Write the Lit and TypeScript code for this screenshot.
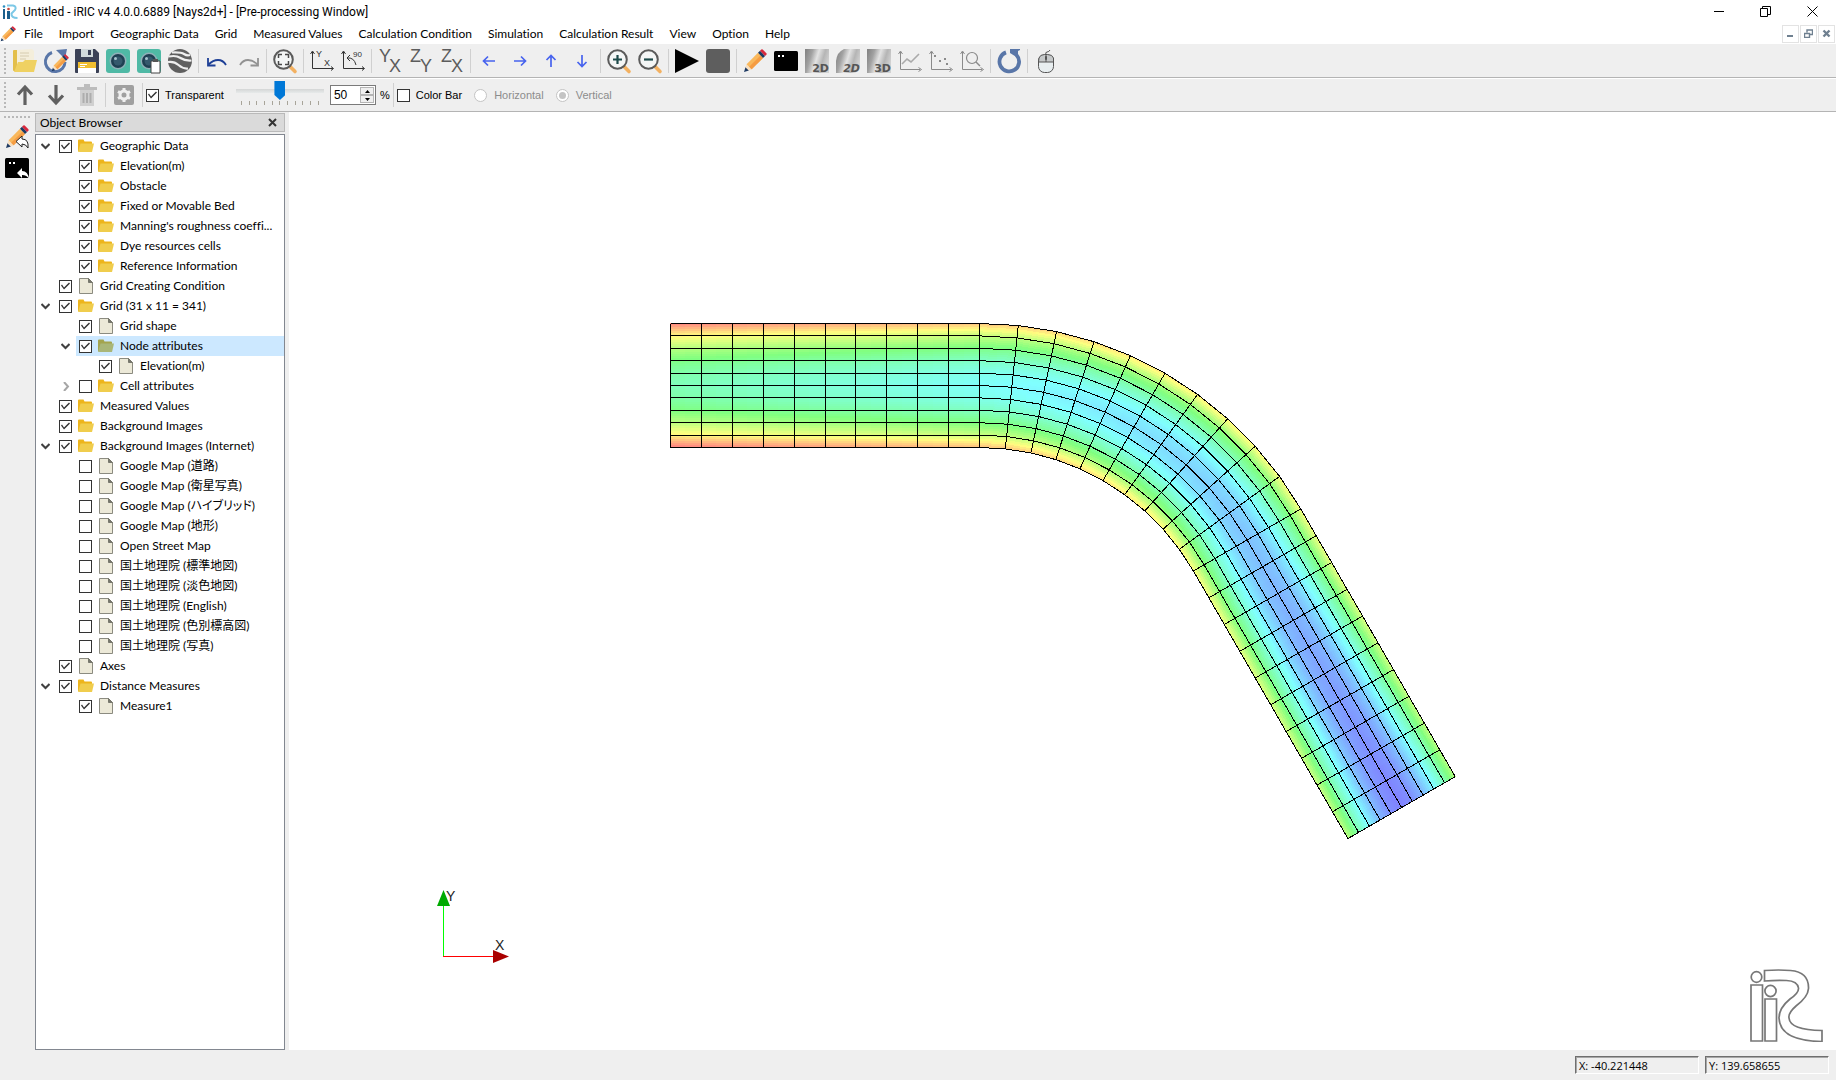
import { LitElement, html, svg, css, TemplateResult, SVGTemplateResult } from "lit";
import { customElement, property, state } from "lit/decorators.js";
import { classMap } from "lit/directives/class-map.js";

/* ------------------------------------------------------------------ icons */

const PENCIL = svg`
  <path d="M1 23l1.6-5L6 21.4z" fill="#1d3a63"/>
  <path d="M2.4 18.2L4 14.6l5.4 5.4-3.600 1.500z" fill="#f7dfc0"/>
  <path d="M3.600 15.200L15 3.800 20 8.900 8.700 20.300z" fill="#f9b85c"/>
  <path d="M6.200 17.700L17.500 6.400 20 8.900 8.700 20.300z" fill="#f59c43"/>
  <path d="M15 3.800l2-2 5.100 5.100-2.100 2z" fill="#1d3a63"/>
  <path d="M17 1.800L18.300.6q.7-.6 1.400 0l3.700 3.700q.6.700 0 1.400l-1.300 1.200z" fill="#d8283c"/>`;

const CONSOLE = svg`
  <rect x="0" y="2" width="24" height="20" rx="1.500" fill="#000"/>
  <path d="M4 6h2v2H4zM8 6h2v2H8z" fill="#fff"/>`;

const CAMERA = svg`
  <rect width="24" height="24" rx="3" fill="#4fb9a5"/>
  <circle cx="12" cy="12" r="8.500" fill="#8fb0b8"/>
  <circle cx="12" cy="12" r="7" fill="#1f3f52"/>
  <circle cx="12" cy="12" r="4.500" fill="#35596d"/>
  <circle cx="9.500" cy="9.500" r="1.500" fill="#a6c3cd"/>`;

const LENS = svg`
  <path d="M16.500 17l5.500 5.500" stroke="#f3b161" stroke-width="3.600" stroke-linecap="round"/>
  <circle cx="10.500" cy="10.500" r="9.300" fill="#f4f6f6" stroke="#5b5b5b" stroke-width="2"/>`;

const FRAME = svg`
  <path d="M2.500 3v17.500H22" fill="none" stroke="#8a8a8a"/>
  <path d="M.5 5l2-3 2 3M20.500 18.500l3 2-3 2" fill="none" stroke="#8a8a8a"/>`;

const FRAME_DARK = svg`
  <path d="M2.500 3v16.500H23" fill="none" stroke="#333"/>
  <path d="M.5 5l2-3 2 3M21 17.500l2.500 2-2.500 2" fill="none" stroke="#333"/>`;

const SHADE = svg`
  <defs>
    <linearGradient id="metal" x1="0" y1="0.200" x2="1" y2="0.500">
      <stop offset="0" stop-color="#858585"/><stop offset=".25" stop-color="#a2a2a2"/>
      <stop offset=".5" stop-color="#e3e3e3"/><stop offset=".75" stop-color="#b5b5b5"/>
      <stop offset="1" stop-color="#d2d2d2"/>
    </linearGradient>
  </defs>`;

const pair = (a: string, b: string) => svg`
  <g fill="#5c5c5c" font-family="Liberation Sans, sans-serif" font-size="18">
    <text x="1" y="13">${a}</text><text x="11" y="23">${b}</text>
  </g>`;

const view = (label: string, slanted = false) => svg`
  ${SHADE}
  <path d=${slanted ? "M8 0h16v16q0 8-8 8H0V12Q1 3 8 0z" : "M0 0h24v24H0z"} fill="url(#metal)"/>
  <text x="24" y="23" text-anchor="end" fill="#555" font-family="DejaVu Sans, sans-serif" font-size="11"
    font-weight="bold" font-style=${slanted ? "italic" : "normal"}>${label}</text>`;

const ICONS: Record<string, SVGTemplateResult> = {
  open: svg`
    <path d="M0 2q0-1 1-1h5l1 2h13v19H1q-1 0-1-1z" fill="#e3bf4b"/>
    <path d="M4 1l15-1 2 2v14H4z" fill="#f4eedb"/>
    <path d="M7 4h9M7 7h9M7 10h6" stroke="#d6ccb0"/>
    <path d="M1 23l4-10h5l2-2h12l-3 12z" fill="#efd162"/>`,
  reopen: svg`
    <path d="M8 3.500A9.800 9.800 0 1 0 21 13" fill="none" stroke="#5976a8" stroke-width="3"/>
    <path d="M12 1l11-1-2 10z" fill="#5976a8"/>
    <g transform="translate(7 5) scale(.75)">${PENCIL}</g>`,
  save: svg`
    <path d="M0 1q0-1 1-1h19l4 4v19q0 1-1 1H1q-1 0-1-1z" fill="#3b4156"/>
    <path d="M6 0h12v8H6z" fill="#d2dadb"/><path d="M13 1h3v5h-3z" fill="#3b4156"/>
    <path d="M3 13h18v11H3z" fill="#fff"/><path d="M3 13h18v6H3z" fill="#f1be2f"/>
    <path d="M5 15.500h7M5 17.500h5" stroke="#fff"/>`,
  camera: CAMERA,
  cameraCopy: svg`${CAMERA}
    <path d="M14 12h9v12h-9z" fill="#fff" stroke="#444"/><path d="M16 10h5v3h-5z" fill="#555"/>`,
  earth: svg`
    <circle cx="12" cy="12" r="12" fill="#606060"/>
    <path d="M1 7.500q7-1.500 11.500 1.500t11 2.500M0 13q6-1 10.500 3t9.500 3.500M4 3.500q9-.5 12 1.500t6 1" fill="none" stroke="#efefef" stroke-width="2.200"/>`,
  undo: svg`<path d="M3.500 15.500Q8 11 13 11t8 5" fill="none" stroke="#1d3f96" stroke-width="1.800"/>
    <path d="M3 9v7.500h7.500" fill="none" stroke="#1d3f96" stroke-width="1.800"/>`,
  redo: svg`<path d="M21.500 15.500Q17 11 12 11t-8 5" fill="none" stroke="#929292" stroke-width="1.800"/>
    <path d="M22 9v7.500h-7.500" fill="none" stroke="#929292" stroke-width="1.800"/>`,
  fit: svg`${LENS}<path d="M5.500 9V5.500H9M12 5.500h3.500V9M15.500 12v3.500H12M9 15.500H5.500V12" fill="none"
    stroke="#4a4a4a" stroke-width="1.500"/>`,
  axes: svg`${FRAME_DARK}<g fill="#333" font-family="Liberation Sans, sans-serif" font-size="9">
    <text x="6" y="8">Y</text><text x="14" y="17">X</text></g>`,
  rotate: svg`${FRAME_DARK}<path d="M6 9q7-1 9 7M9 6L6 9l3 3" fill="none" stroke="#333"/>
    <text x="12" y="8" fill="#333" font-family="Liberation Sans, sans-serif" font-size="8">90</text>`,
  yx: pair("Y", "X"),
  zy: pair("Z", "Y"),
  zx: pair("Z", "X"),
  left: svg`<path d="M18 12H7M11 7.500L6.500 12l4.500 4.500" fill="none" stroke="#4763ee" stroke-width="1.700"/>`,
  right: svg`<path d="M6 12h11M13 7.500l4.500 4.500-4.500 4.500" fill="none" stroke="#4763ee" stroke-width="1.700"/>`,
  up: svg`<path d="M12 18V7M7.500 11L12 6.500l4.500 4.500" fill="none" stroke="#4763ee" stroke-width="1.700"/>`,
  down: svg`<path d="M12 6v11M7.500 13l4.500 4.500 4.500-4.500" fill="none" stroke="#4763ee" stroke-width="1.700"/>`,
  zoomIn: svg`${LENS}<path d="M6 10.500h9M10.500 6v9" stroke="#1d4a4a" stroke-width="2.200"/>`,
  zoomOut: svg`${LENS}<path d="M6 10.500h9" stroke="#1d4a4a" stroke-width="2.200"/>`,
  play: svg`<path d="M0 0l24 12L0 24z" fill="#000"/>`,
  stop: svg`<rect width="24" height="24" rx="3" fill="#5e5e5e"/>`,
  pencil: PENCIL,
  console: CONSOLE,
  view2d: view("2D"),
  view2dSlant: view("2D", true),
  view3d: view("3D"),
  line: svg`${FRAME}<path d="M4 15l5-5 4 3 8-8" fill="none" stroke="#aaa" stroke-width="1.600"/>`,
  scatter: svg`${FRAME}<path d="M5 6h2v2H5zM10 11h2v2h-2zM15 9h2v2h-2zM17 14h2v2h-2z" fill="#8a8a8a"/>`,
  inspect: svg`${FRAME}<circle cx="12" cy="9" r="5.500" fill="none" stroke="#8a8a8a" stroke-width="1.200"/>
    <path d="M16 13l4 4" stroke="#8a8a8a" stroke-width="1.500"/>`,
  reload: svg`<path d="M9 3.400A9.800 9.800 0 1 0 19.500 6" fill="none" stroke="#5976a8" stroke-width="3.800"/>
    <path d="M13 0h10v1l-2 1v7l-8-5z" fill="#5976a8"/>`,
  mouse: svg`<rect x="4.500" y="6" width="15" height="17.500" rx="6" fill="#e8eef0" stroke="#555"/>
    <path d="M5 9q1-3.500 5.500-3.500h3Q18.500 5.500 19.500 9v4h-15z" fill="#c5c8c9" stroke="#555"/>
    <path d="M12 13V6M12 6q-1-3 1-3t3-2" fill="none" stroke="#555"/><rect x="11" y="7" width="2" height="4" rx="1" fill="#555"/>`,
  moveUp: svg`<path d="M12 22V5M5 11.500L12 4l7 7.500" fill="none" stroke="#606060" stroke-width="3.200"/>`,
  moveDown: svg`<path d="M12 2v17M5 12.500L12 20l7-7.500" fill="none" stroke="#606060" stroke-width="3.200"/>`,
  trash: svg`<path d="M2 4h20v3H2zM9 1h6v3H9z" fill="#bcbcbc"/><path d="M5 7h14v16H5z" fill="#d0d0d0"/>
    <path d="M8.500 10v10M12 10v10M15.500 10v10" stroke="#adadad" stroke-width="2"/>`,
  gear: svg`<rect x="2" y="2" width="20" height="20" rx="2" fill="#a0a0a0"/>
    <path d="M12 5v14M6 8.500l12 7M6 15.500l12-7" stroke="#efefef" stroke-width="3"/>
    <circle cx="12" cy="12" r="4" fill="#a0a0a0" stroke="#efefef" stroke-width="3"/>`,
  pencilBack: svg`${PENCIL}<path d="M17 11v3q7 0 6 9-2-4-6-4v3l-6-5.500z" fill="#fff" stroke="#222"/>`,
  consoleBack: svg`${CONSOLE}<path d="M17 12v3q6 0 7 8-2-4-7-4v3l-5-5z" fill="#fff"/>`,
};

const icon = (name: string) => html`<svg class="icon" viewBox="0 0 24 24" aria-hidden="true">${ICONS[name]}</svg>`;

const FOLDER = html`<svg class="node-icon" viewBox="0 0 16 16" aria-hidden="true">
  <path class="folder-back" d="M0 2.500q0-1 1-1h4.500l1 2H13q1 0 1 1V13H0z"/>
  <path class="folder-front" d="M0 14L2.500 5.500h13.500l-2 8.500z"/></svg>`;
const SHEET = html`<svg class="node-icon" viewBox="0 0 16 16" aria-hidden="true">
  <path d="M1.500.5h9l4 4v11h-13z" fill="#ece9d8" stroke="#8b8b80"/>
  <path d="M10.500.5v4h4z" fill="#77776c" stroke="#77776c"/></svg>`;

/* --------------------------------------------------------------- toolbars */

type Tool = [string, string] | null;

const MAIN_TOOLS: Tool[] = [
  ["open", "Open"], ["reopen", "Reload project"], ["save", "Save"], ["camera", "Snapshot"],
  ["cameraCopy", "Copy snapshot"], ["earth", "Google Earth export"], null,
  ["undo", "Undo"], ["redo", "Redo"], null, ["fit", "Fit"], null,
  ["axes", "Reset rotation"], ["rotate", "Rotate 90"], null,
  ["yx", "XY plane"], ["zy", "YZ plane"], ["zx", "XZ plane"], null,
  ["left", "Move left"], ["right", "Move right"], ["up", "Move up"], ["down", "Move down"], null,
  ["zoomIn", "Zoom in"], ["zoomOut", "Zoom out"], null, ["play", "Run"], ["stop", "Stop"], null,
  ["pencil", "Pre-processing"], ["console", "Solver console"], ["view2d", "2D window"],
  ["view2dSlant", "2D bird's-eye window"], ["view3d", "3D window"], ["line", "Graph window"],
  ["scatter", "Scatter chart"], ["inspect", "Verification"], null, ["reload", "Reload"], null,
  ["mouse", "Mouse hint"],
];

const EDIT_TOOLS: Tool[] = [["moveUp", "Move up"], ["moveDown", "Move down"], ["trash", "Delete"], null,
  ["gear", "Property"], null];

const MENUS = ["File", "Import", "Geographic Data", "Grid", "Measured Values", "Calculation Condition",
  "Simulation", "Calculation Result", "View", "Option", "Help"];

const tools = (list: Tool[]) => list.map((t) => t
  ? html`<button class="tool" title=${t[1]} aria-label=${t[1]}>${icon(t[0])}</button>`
  : html`<span class="sep"></span>`);

/* ------------------------------------------------------------------- tree */

interface Node { text: string; level: number; checked: boolean; folder: boolean; open?: boolean; }

const n = (level: number, text: string, kind: "d" | "f", checked = true, open?: boolean): Node =>
  ({ level, text, folder: kind === "d", checked, open });

const NODES: Node[] = [
  n(0, "Geographic Data", "d", true, true),
  n(1, "Elevation(m)", "d"), n(1, "Obstacle", "d"), n(1, "Fixed or Movable Bed", "d"),
  n(1, "Manning's roughness coeffi...", "d"), n(1, "Dye resources cells", "d"),
  n(1, "Reference Information", "d"),
  n(0, "Grid Creating Condition", "f"),
  n(0, "Grid (31 x 11 = 341)", "d", true, true),
  n(1, "Grid shape", "f"),
  n(1, "Node attributes", "d", true, true),
  n(2, "Elevation(m)", "f"),
  n(1, "Cell attributes", "d", false, false),
  n(0, "Measured Values", "d"),
  n(0, "Background Images", "d"),
  n(0, "Background Images (Internet)", "d", true, true),
  n(1, "Google Map (道路)", "f", false), n(1, "Google Map (衛星写真)", "f", false),
  n(1, "Google Map (ハイブリッド)", "f", false), n(1, "Google Map (地形)", "f", false),
  n(1, "Open Street Map", "f", false),
  n(1, "国土地理院 (標準地図)", "f", false), n(1, "国土地理院 (淡色地図)", "f", false),
  n(1, "国土地理院 (English)", "f", false), n(1, "国土地理院 (色別標高図)", "f", false),
  n(1, "国土地理院 (写真)", "f", false),
  n(0, "Axes", "f"),
  n(0, "Distance Measures", "d", true, true),
  n(1, "Measure1", "f"),
];

@customElement("object-tree")
export class ObjectTree extends LitElement {
  @property({ attribute: false }) nodes: Node[] = [];
  @state() private selected = 10;

  static styles = css`
    :host { display: block; }
    .list { list-style: none; margin: 0; padding: 1px 0; font-feature-settings: "palt"; }
    .row { display: flex; align-items: center; height: 20px; }
    .l1 { padding-left: 20px; }
    .l2 { padding-left: 40px; }
    .twist { width: 20px; height: 20px; padding: 0 1px 0 0; border: 0; background: none; display: grid; place-items: center; flex: none; box-sizing: border-box; }
    .twist svg { width: 9px; height: 9px; fill: none; stroke: #404040; stroke-width: 2; }
    .twist.closed svg { stroke: #a6a6a6; }
    .item { display: flex; align-items: center; flex: 1; min-width: 0; height: 20px; padding-left: 3px; }
    .item.selected { background: #cce8ff; }
    .check { appearance: none; width: 13px; height: 13px; margin: 0 6px 0 0; border: 1px solid #333; background: #fff; flex: none; display: block; }
    .check:checked::after { content: ""; display: block; width: 11px; height: 11px; background: #333;
      clip-path: polygon(1px 5px, 2px 4px, 4px 7px, 9px 2px, 10px 3px, 4px 9px); }
    .node-icon { width: 16px; height: 16px; margin-right: 6px; flex: none; }
    .folder-back { fill: #edb51c; }
    .folder-front { fill: #f0cd4d; }
    .selected .folder-back { fill: #a3a44f; }
    .selected .folder-front { fill: #a9b678; }
    .text { white-space: nowrap; line-height: 20px; }
  `;

  private twist(node: Node): TemplateResult {
    if (node.open === undefined) return html`<span class="twist"></span>`;
    return html`<button class=${classMap({ twist: true, closed: !node.open })}
      aria-label=${node.open ? "Collapse" : "Expand"}>
      <svg viewBox="0 0 9 9"><path d=${node.open ? "M.5 2l4 4 4-4" : "M3 0l4 4.500-4 4.500"}></path></svg></button>`;
  }

  render() {
    return html`<ul class="list">${this.nodes.map((node, i) => html`
      <li class="row l${node.level}">${this.twist(node)}
        <div class=${classMap({ item: true, selected: i === this.selected })} @click=${() => { this.selected = i; }}>
          <input class="check" type="checkbox" id="n${i}" .checked=${node.checked}>
          ${node.folder ? FOLDER : SHEET}
          <label class="text" for="n${i}">${node.text}</label>
        </div>
      </li>`)}</ul>`;
  }
}

/* ------------------------------------------------------------------ scene */

const COLS = 30;
const ROWS = 10;
const STEP = 12.4;
const LEG = 309;
const TURN = Math.PI / 3;
const START = { x: 381.5, y: 273.5 };
const PIVOT = { x: START.x + LEG, y: START.y + LEG };

/* Maps a station along the channel (0..30) and an offset across it (0..10) to the plane. */
function place(i: number, j: number): [number, number] {
  const off = (j - ROWS / 2) * STEP;
  if (i <= 10) return [START.x + (LEG * i) / 10, START.y + off];
  const a = Math.min((i - 10) / 10, 1) * TURN;
  const r = LEG - off;
  const x = PIVOT.x + r * Math.sin(a);
  const y = PIVOT.y - r * Math.cos(a);
  const rest = i > 20 ? (LEG * (i - 20)) / 10 : 0;
  return [x + rest * Math.cos(TURN), y + rest * Math.sin(TURN)];
}

/* Straight chords between grid nodes. */
function chord(i: number, j: number): [number, number] {
  const a = Math.min(Math.floor(i), COLS - 1);
  const f = i - a;
  const p = place(a, j);
  const q = place(a + 1, j);
  return [p[0] + (q[0] - p[0]) * f, p[1] + (q[1] - p[1]) * f];
}

/* Hue gained towards the middle of the channel, per grid line across it. */
const PROFILE = [0, 54, 92, 121, 140, 147, 140, 121, 92, 54, 0];

function tint(i: number, j: number): string {
  const a = Math.min(Math.floor(j), ROWS - 1);
  const f = j - a;
  const hue = Math.min(240, 3.1 * i + PROFILE[a] * (1 - f) + PROFILE[a + 1] * f);
  return `hsl(${hue.toFixed(1)} 100% 75%)`;
}

const join = (pts: [number, number][]) => pts.map(([x, y]) => `${x.toFixed(1)},${y.toFixed(1)}`).join(" ");

function patches(): SVGTemplateResult[] {
  const out: SVGTemplateResult[] = [];
  const du = 1 / 2;
  const dv = 1 / 6;
  for (let i = 0; i < COLS * 2; i++) {
    for (let j = 0; j < ROWS * 6; j++) {
      const u = i * du;
      const v = j * dv;
      const c = tint(u + du / 2, v + dv / 2);
      out.push(svg`<polygon points=${join([chord(u, v), chord(u + du, v), chord(u + du, v + dv), chord(u, v + dv)])}
        fill=${c} stroke=${c}/>`);
    }
  }
  return out;
}

function meshLines(): SVGTemplateResult[] {
  const out: SVGTemplateResult[] = [];
  for (let i = 0; i <= COLS; i++) out.push(svg`<polyline points=${join([place(i, 0), place(i, ROWS)])}/>`);
  for (let j = 0; j <= ROWS; j++) {
    out.push(svg`<polyline points=${join(Array.from({ length: COLS + 1 }, (_, i) => place(i, j)))}/>`);
  }
  return out;
}

@customElement("grid-scene")
export class GridScene extends LitElement {
  static styles = css`
    :host { display: block; position: relative; background: #fff; overflow: hidden; }
    .mesh { display: block; width: 100%; height: 100%; }
    .cells, .lines { shape-rendering: crispEdges; }
    .lines { fill: none; stroke: #000; stroke-width: 1; }
    .axes { position: absolute; left: 145px; bottom: 84px; width: 80px; height: 80px; }
    .logo { position: absolute; right: 13px; bottom: 8px; width: 74px; height: 74px; }
  `;

  render() {
    return html`
      <svg class="mesh" viewBox="0 0 1547 938" role="img" aria-label="Grid">
        <g class="cells">${patches()}</g>
        <g class="lines">${meshLines()}</g>
      </svg>
      <svg class="axes" viewBox="0 0 80 80" font-family="Liberation Sans, sans-serif" font-size="14">
        <path d="M9.500 20v50" stroke="#0f0"/>
        <path d="M9 70.500h50" stroke="#f00"/>
        <path d="M9.500 4l6.500 16H3z" fill="#00aa00"/>
        <path d="M75 70.500L59 64v13z" fill="#aa0000"/>
        <text x="12" y="15" fill="#222">Y</text>
        <text x="61" y="64" fill="#222">X</text>
      </svg>
      <svg class="logo" viewBox="0 0 74 74" fill="#fff" stroke="#777" stroke-width="1.700">
        <circle cx="7.500" cy="9" r="5.300"/>
        <path d="M2 17h11.500v56H2z"/>
        <circle cx="21.500" cy="23" r="5.600"/>
        <path d="M16 31h11.500v42H16z"/>
        <path d="M15.500 2.500q15-1 26 0Q60 4 59.500 20.500 59 29 47 38q-8 7-7 12 1 12 33 12.500v11Q31 73 30 50q0-10 11-19 9-6 8.500-11-1-7-12-7.500-10-.5-22 .5z"/>
      </svg>`;
  }
}

/* ------------------------------------------------------------------- root */

@customElement("app-root")
export class AppRoot extends LitElement {
  @state() private opacity = 50;

  static styles = css`
    :host { display: flex; flex-direction: column; height: 100vh; background: #efefef; color: #000;
      font: 12px/20px Lato, "Noto Sans CJK JP", sans-serif; font-variant-ligatures: none; }
    button, input { font: inherit; color: inherit; }
    .title { display: flex; align-items: center; height: 23px; background: #fff; padding-left: 2px; }
    .app-logo { width: 16px; height: 16px; margin-right: 5px; }
    .title h1 { font: 12px/24px Roboto, sans-serif; margin: 0; flex: 1; }
    .win { width: 46px; height: 20px; padding: 0; border: 0; background: none; display: grid; place-items: center; }
    .win:last-child { width: 48px; }
    .win svg { width: 11px; height: 11px; fill: none; stroke: #000; }
    .menubar { display: flex; align-items: center; height: 21px; background: #fff; border-bottom: 1px solid #efefef; }
    .menu-icon { width: 16px; height: 16px; flex: none; }
    .menus { display: flex; flex: 1; }
    .menu { border: 0; background: none; padding: 0 8px; line-height: 20px; white-space: nowrap; }
    .mdi { display: flex; gap: 1px; padding-right: 1px; }
    .mdi button { width: 17px; height: 18px; padding: 0; border: 1px solid #e3e3e3; background: #fff; display: grid; place-items: center; }
    .mdi svg { width: 9px; height: 9px; fill: none; stroke: #6f8090; }
    .top { background: #fff; }
    .bar { display: flex; align-items: center; gap: 1px; height: 32px; background: #efefef; border-bottom: 1px solid #b4b4b4; padding-left: 4px; }
    .main-bar { margin-bottom: 1px; }
    .grip { width: 2px; height: 26px; margin-right: 3px;
      background: repeating-linear-gradient(#b8b8b8 0 2px, transparent 2px 4px); }
    .tool { width: 30px; height: 30px; padding: 0; border: 0; background: none; display: grid; place-items: center; flex: none; }
    .icon { width: 24px; height: 24px; display: block; overflow: visible; }
    .sep { width: 1px; height: 24px; margin: 0 2px; background: #d0d0d0; flex: none; }
    .small { font: 11px/16px "Liberation Sans", sans-serif; }
    .opt { display: flex; align-items: center; gap: 6px; margin-right: 11px; }
    .opt.off { color: #8c8c8c; gap: 7px; }
    .check { appearance: none; width: 13px; height: 13px; margin: 0; border: 1px solid #333; background: #fff; display: block; }
    .check:checked::after { content: ""; display: block; width: 11px; height: 11px; background: #333;
      clip-path: polygon(1px 5px, 2px 4px, 4px 7px, 9px 2px, 10px 3px, 4px 9px); }
    .radio { appearance: none; width: 13px; height: 13px; margin: 0; border: 1px solid #c4c4c4; border-radius: 50%; background: #fff; display: grid; place-items: center; }
    .radio:checked::after { content: ""; width: 7px; height: 7px; border-radius: 50%; background: #c4c4c4; }
    .slide { display: flex; flex-direction: column; width: 88px; padding-bottom: 4px; }
    .range { appearance: none; width: 100%; height: 19px; margin: 0; background: linear-gradient(#d4d6d6, #e7eaea) center 8px / 100% 4px no-repeat; display: block; }
    .range::-webkit-slider-thumb { appearance: none; width: 11px; height: 19px; background: #0078d7;
      clip-path: polygon(0 0, 100% 0, 100% 14px, 50% 100%, 0 14px); }
    .ticks { display: flex; justify-content: space-between; padding: 1px 5px 0; }
    .ticks i { width: 1px; height: 4px; background: #a8a499; }
    .spin { display: flex; width: 44px; height: 18px; border: 1px solid #7a7a7a; background: #fff; margin: 0 3px 0 5px; }
    .spin input { appearance: textfield; border: 0; padding: 0 0 0 3px; width: 26px; min-width: 0; background: none; outline: 0; font-size: 12px; }
    .spin input::-webkit-inner-spin-button { appearance: none; }
    .steps { display: grid; grid-template-rows: 1fr 1fr; width: 14px; margin: 1px; }
    .steps button { padding: 0; border: 1px solid #b5b5b5; background: #efefef; display: grid; place-items: center; min-height: 0; }
    .steps svg { width: 5px; height: 3px; display: block; }
    .body { flex: 1; display: flex; min-height: 0; }
    .side { width: 34px; display: flex; flex-direction: column; align-items: center; gap: 1px; }
    .side .grip { width: 26px; height: 2px; margin: 4px 0 3px;
      background: repeating-linear-gradient(90deg, #b8b8b8 0 2px, transparent 2px 4px); }
    .dock { width: 250px; display: flex; flex-direction: column; margin: 1px 4px 0 1px; box-sizing: border-box; }
    .dock-title { display: flex; align-items: center; justify-content: space-between; height: 17px; border: 1px solid #b9b9b9; background: #dadada; padding: 0 7px 0 4px; margin-bottom: 2px; }
    .dock-title h2 { font-size: 12px; font-weight: normal; margin: 0; line-height: 18px; }
    .dock-title button { border: 0; background: none; padding: 0; width: 9px; height: 9px; display: grid; }
    .dock-title svg { width: 9px; height: 9px; stroke: #333; stroke-width: 2; }
    .tree { flex: 1; min-height: 0; overflow: hidden; border: 1px solid #828790; background: #fff; }
    .scene { flex: 1; min-width: 0; }
    .status { display: flex; justify-content: flex-end; align-items: center; gap: 6px; height: 30px; padding-right: 7px;
      font: 11px/18px "Open Sans", sans-serif; }
    .field { width: 119px; height: 16px; padding-left: 3px; border: 1px solid; border-color: #6f6f6f #fff #fff #6f6f6f; box-shadow: inset 1px 1px #a8a8a8; }
  `;

  private step(by: number) {
    this.opacity = Math.max(0, Math.min(100, this.opacity + by));
  }

  render() {
    return html`
      <header class="top">
        <div class="title">
          <svg class="app-logo" viewBox="0 0 16 16" aria-hidden="true">
            <path d="M1 5h2v10H1zM5 7h3v8H5z" fill="#1b5f8c"/><circle cx="2" cy="2.500" r="1.300" fill="#2c8fbf"/><circle cx="6.500" cy="5" r="1.300" fill="#c8453a"/>
            <path d="M5 1.500h6q4 1 2 4.500L9.500 9.500Q9 14 15.500 14" fill="none" stroke="#7cc8e6" stroke-width="2"/>
          </svg>
          <h1>Untitled - iRIC v4 4.0.0.6889 [Nays2d+] - [Pre-processing Window]</h1>
          <button class="win" aria-label="Minimize"><svg viewBox="0 0 11 11"><path d="M0 5.500h10"/></svg></button>
          <button class="win" aria-label="Restore"><svg viewBox="0 0 11 11"><path d="M.5 2.500h7v8h-7zM2.500 2V.5h8v8H8"/></svg></button>
          <button class="win" aria-label="Close"><svg viewBox="0 0 11 11"><path d="M.5.5l10 10M10.500.5l-10 10"/></svg></button>
        </div>
        <nav class="menubar">
          <svg class="menu-icon" viewBox="0 0 24 24" aria-hidden="true">${PENCIL}</svg>
          <div class="menus">${MENUS.map((m) => html`<button class="menu">${m}</button>`)}</div>
          <div class="mdi">
            <button aria-label="Minimize child"><svg viewBox="0 0 9 9"><path d="M1 7h6" stroke-width="2"/></svg></button>
            <button aria-label="Restore child"><svg viewBox="0 0 9 9"><path d="M.5 4.500h5v4h-5zM3 3.500V1h5.500v4.500H6" stroke-width="1.400"/></svg></button>
            <button aria-label="Close child"><svg viewBox="0 0 9 9"><path d="M1.500 1.500l6 6M7.500 1.500l-6 6" stroke-width="2.400"/></svg></button>
          </div>
        </nav>
        <div class="bar main-bar"><span class="grip"></span>${tools(MAIN_TOOLS)}</div>
        <div class="bar small"><span class="grip"></span>${tools(EDIT_TOOLS)}
          <label class="opt"><input class="check" type="checkbox" checked>Transparent</label>
          <div class="slide">
            <input class="range" type="range" min="0" max="100" aria-label="Opacity" .value=${String(this.opacity)}
              @input=${(e: Event) => { this.opacity = Number((e.target as HTMLInputElement).value); }}>
            <div class="ticks">${Array.from({ length: 11 }, () => html`<i></i>`)}</div>
          </div>
          <div class="spin">
            <input id="pct" type="number" min="0" max="100" .value=${String(this.opacity)}>
            <div class="steps">
              <button aria-label="Increase" @click=${() => this.step(1)}><svg viewBox="0 0 5 3"><path d="M0 3l2.500-3L5 3z"/></svg></button>
              <button aria-label="Decrease" @click=${() => this.step(-1)}><svg viewBox="0 0 5 3"><path d="M0 0l2.500 3L5 0z"/></svg></button>
            </div>
          </div>
          <label for="pct">%</label>
          <span class="sep"></span>
          <label class="opt"><input class="check" type="checkbox">Color Bar</label>
          <label class="opt off"><input class="radio" type="radio" name="dir" disabled>Horizontal</label>
          <label class="opt off"><input class="radio" type="radio" name="dir" checked disabled>Vertical</label>
        </div>
      </header>
      <main class="body">
        <div class="side"><span class="grip"></span>${tools([["pencilBack", "Pre-processing window"], ["consoleBack", "Console window"]])}</div>
        <section class="dock">
          <div class="dock-title"><h2>Object Browser</h2>
            <button aria-label="Close panel"><svg viewBox="0 0 9 9"><path d="M1 1l7 7M8 1L1 8"/></svg></button></div>
          <object-tree class="tree" .nodes=${NODES}></object-tree>
        </section>
        <grid-scene class="scene"></grid-scene>
      </main>
      <footer class="status">
        <output class="field">X: -40.221448</output>
        <output class="field">Y: 139.658655</output>
      </footer>`;
  }
}
